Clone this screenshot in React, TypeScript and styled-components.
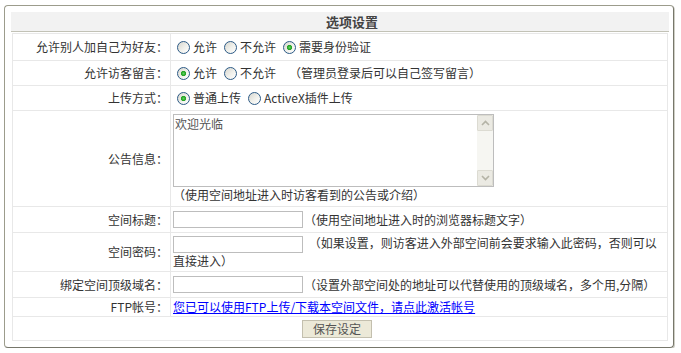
import React from "react";
import styled, { createGlobalStyle } from "styled-components";

const Global = createGlobalStyle`
  html, body { margin: 0; padding: 0; background: #fff; }
  body {
    font-family: "Noto Sans CJK SC", "Liberation Sans", sans-serif;
    font-size: 12px;
    color: #333;
  }
  * { box-sizing: border-box; }
`;

const Frame = styled.div`
  width: 670px;
  margin: 5px 0 0 4px;
  padding: 6px 4px 6px 6px;
  border: 1px solid #9c9c8c;
  border-right-color: #77776b;
  border-bottom-color: #77776b;
  border-radius: 4px;
  box-shadow: 1px 1px 0 #cfcfc6;
`;

const Header = styled.div`
  height: 20px;
  background: #f2f2f2;
  border-bottom: 1px solid #c2c2b6;
  display: flex;
  align-items: center;
  justify-content: center;
  padding-left: 24px;
  font-size: 13px;
  font-weight: bold;
  color: #444;
  line-height: 19px;
`;

const Table = styled.div`
  margin: 1px 1px 0 1px;
  border: 1px solid #e8e8e8;
  border-bottom: none;
`;

const Row = styled.div<{ $h: number }>`
  display: grid;
  grid-template-columns: 158px 1fr;
  height: ${(p) => p.$h}px;
  border-bottom: 1px solid #e8e8e8;
  line-height: 16px;
`;

const Label = styled.div`
  display: flex;
  align-items: center;
  justify-content: flex-end;
  padding-right: 2px;
  border-right: 1px solid #e8e8e8;
  color: #333;
  white-space: nowrap;
`;

const Value = styled.div<{ $start?: boolean }>`
  display: flex;
  flex-direction: column;
  justify-content: ${(p) => (p.$start ? "flex-start" : "center")};
  align-items: flex-start;
  padding: ${(p) => (p.$start ? "3px 2px 0 2px" : "0 2px")};
  min-width: 0;
`;

const Line = styled.div`
  display: flex;
  align-items: center;
  white-space: nowrap;
`;

const FlowLine = styled.div`
  line-height: 16px;
`;

const Radio = styled.input.attrs({ type: "radio" })`
  appearance: none;
  -webkit-appearance: none;
  width: 13px;
  height: 13px;
  margin: 0 3px 0 4px;
  border-radius: 50%;
  border: 1px solid #2c5a86;
  background: linear-gradient(135deg, #d6d6cf 0%, #f1f1ec 55%, #ffffff 100%);
  flex: none;
  &:checked {
    background: radial-gradient(circle at 50% 50%, #5fd35f 0, #21a121 2.2px, transparent 3px),
      linear-gradient(135deg, #d6d6cf 0%, #f1f1ec 55%, #ffffff 100%);
  }
`;

const Option = styled.label`
  display: inline-flex;
  align-items: center;
  margin-right: 3px;
  color: #333;
`;

const Note = styled.span<{ $gap?: number }>`
  margin-left: ${(p) => p.$gap ?? 0}px;
  color: #333;
`;

const TextInput = styled.input.attrs({ type: "text" })`
  width: 130px;
  height: 17px;
  margin: 0 1px 0 0;
  padding: 0 2px;
  border: 1px solid #bdbdbd;
  background: #fff;
  vertical-align: middle;
  font: inherit;
`;

const TextBox = styled.div`
  display: flex;
  width: 321px;
  height: 73px;
  border: 1px solid #bdbdbd;
  background: #fff;
`;

const Area = styled.textarea`
  flex: 1;
  border: none;
  outline: none;
  resize: none;
  overflow: hidden;
  padding: 1px 1px;
  font-family: inherit;
  font-size: 12px;
  line-height: 15px;
  color: #555;
  background: transparent;
`;

const ScrollBar = styled.div`
  width: 16px;
  background: #f6f6f2;
  display: flex;
  flex-direction: column;
  justify-content: space-between;
`;

const ScrollButton = styled.div`
  width: 16px;
  height: 16px;
  background: #ebeae3;
  border: 1px solid #dcdbd2;
  border-radius: 1px;
  display: flex;
  align-items: center;
  justify-content: center;
`;

const Link = styled.a`
  color: #0000ff;
  text-decoration: underline;
  white-space: nowrap;
`;

const ButtonRow = styled.div`
  display: flex;
  align-items: center;
  justify-content: center;
  height: 24px;
  border-bottom: 1px solid #e8e8e8;
`;

const SaveButton = styled.button`
  width: 70px;
  height: 18px;
  margin-right: 6px;
  padding: 0;
  background: #ece9d8;
  border: 1px solid #c3bfae;
  font-family: inherit;
  font-size: 12px;
  line-height: 16px;
  color: #555;
`;

const Chevron = ({ up }: { up?: boolean }) => (
  <svg width="9" height="6" viewBox="0 0 9 6">
    <path
      d={up ? "M1 5 L4.5 1.5 L8 5" : "M1 1 L4.5 4.5 L8 1"}
      fill="none"
      stroke="#b4b3a6"
      strokeWidth="1.6"
    />
  </svg>
);

export default function App() {
  return (
    <>
      <Global />
      <Frame>
        <Header>选项设置</Header>
        <Table>
          <Row $h={27}>
            <Label>允许别人加自己为好友：</Label>
            <Value>
              <Line>
                <Option><Radio name="friend" />允许</Option>
                <Option><Radio name="friend" />不允许</Option>
                <Option><Radio name="friend" defaultChecked />需要身份验证</Option>
              </Line>
            </Value>
          </Row>
          <Row $h={25}>
            <Label>允许访客留言：</Label>
            <Value>
              <Line>
                <Option><Radio name="msg" defaultChecked />允许</Option>
                <Option><Radio name="msg" />不允许</Option>
                <Note $gap={10}>（管理员登录后可以自己签写留言）</Note>
              </Line>
            </Value>
          </Row>
          <Row $h={25}>
            <Label>上传方式：</Label>
            <Value>
              <Line>
                <Option><Radio name="up" defaultChecked />普通上传</Option>
                <Option><Radio name="up" />ActiveX插件上传</Option>
              </Line>
            </Value>
          </Row>
          <Row $h={96}>
            <Label>公告信息：</Label>
            <Value $start>
              <TextBox>
                <Area defaultValue="欢迎光临" />
                <ScrollBar>
                  <ScrollButton><Chevron up /></ScrollButton>
                  <ScrollButton><Chevron /></ScrollButton>
                </ScrollBar>
              </TextBox>
              <Line>（使用空间地址进入时访客看到的公告或介绍）</Line>
            </Value>
          </Row>
          <Row $h={26}>
            <Label>空间标题：</Label>
            <Value>
              <Line>
                <TextInput />
                <Note>（使用空间地址进入时的浏览器标题文字）</Note>
              </Line>
            </Value>
          </Row>
          <Row $h={39}>
            <Label>空间密码：</Label>
            <Value>
              <FlowLine>
                <TextInput /> <Note $gap={2}>（如果设置，则访客进入外部空间前会要求输入此密码，否则可以直接进入）</Note>
              </FlowLine>
            </Value>
          </Row>
          <Row $h={26}>
            <Label>绑定空间顶级域名：</Label>
            <Value>
              <Line>
                <TextInput />
                <Note>（设置外部空间处的地址可以代替使用的顶级域名，多个用,分隔）</Note>
              </Line>
            </Value>
          </Row>
          <Row $h={19}>
            <Label>FTP帐号：</Label>
            <Value>
              <Line>
                <Link href="#">您已可以使用FTP上传/下载本空间文件，请点此激活帐号</Link>
              </Line>
            </Value>
          </Row>
          <ButtonRow>
            <SaveButton>保存设定</SaveButton>
          </ButtonRow>
        </Table>
      </Frame>
    </>
  );
}
